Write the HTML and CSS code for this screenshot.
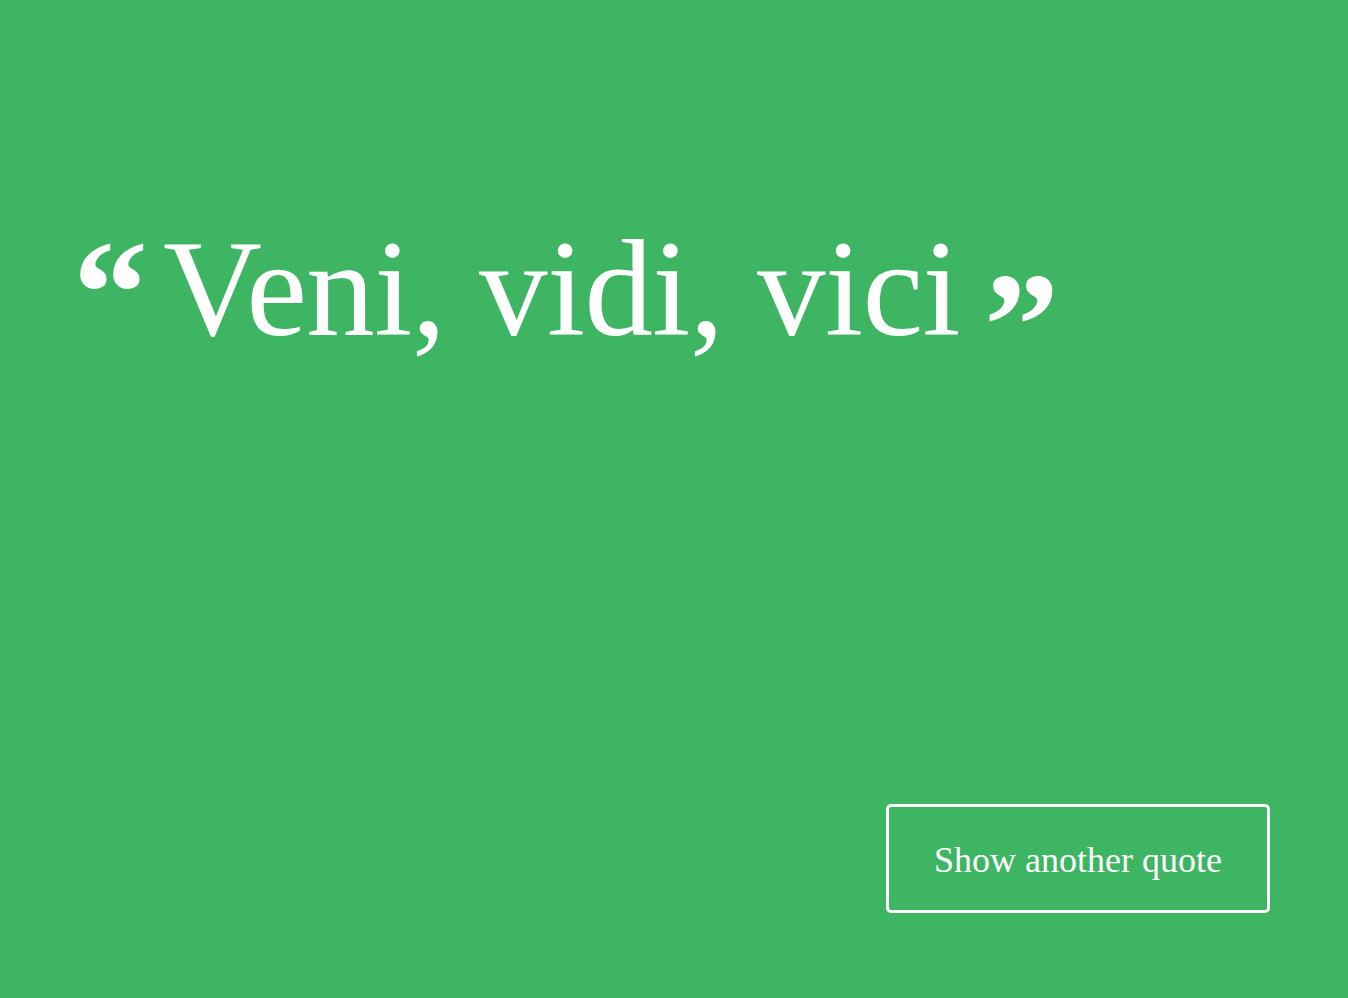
FILE: index.html
```html
<!DOCTYPE html>
<html lang="en">
<head>
<meta charset="utf-8">
<title>Random Quote</title>
<link rel="stylesheet" href="styles.css">
</head>
<body>
<main class="page">
  <blockquote class="quote">
    <span class="mark mark-open">&ldquo;</span>
    <span class="quote-text">Veni, vidi, vici</span>
    <span class="mark mark-close">&rdquo;</span>
  </blockquote>
  <button class="btn" type="button">Show another quote</button>
</main>
</body>
</html>
```
FILE: styles.css
```css
html, body {
  margin: 0;
  padding: 0;
  height: 100%;
}
body {
  background: #3eb562;
  color: #ffffff;
  font-family: "Liberation Serif", "Times New Roman", serif;
}
.page {
  box-sizing: border-box;
  height: 100vh;
  display: flex;
  flex-direction: column;
  padding: 0 78px 85px 78px;
}
.quote {
  margin: 221px 0 0 0;
  display: flex;
  align-items: flex-start;
}
.mark {
  font-weight: bold;
  font-size: 150px;
  line-height: 1;
}
.mark-open {
  margin-top: -3px;
  margin-left: -5px;
}
.mark-close {
  margin-top: 29px;
  margin-left: 24px;
}
.quote-text {
  font-size: 137px;
  line-height: 1;
  margin-left: 15px;
  letter-spacing: -0.6px;
}
.btn {
  margin-top: auto;
  align-self: flex-end;
  width: 384px;
  height: 109px;
  background: transparent;
  border: 3px solid #ffffff;
  border-radius: 5px;
  color: #ffffff;
  font-family: "Liberation Serif", "Times New Roman", serif;
  font-size: 36px;
  padding: 2px 0 0 0;
  cursor: pointer;
}
```
